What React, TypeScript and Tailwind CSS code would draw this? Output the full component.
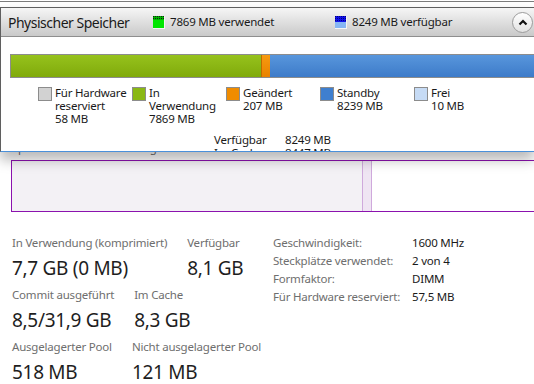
import React from "react";

const UsedIcon = () => (
  <svg width="12" height="13" viewBox="0 0 12 13" aria-hidden="true">
    <defs>
      <pattern id="dotsGreen" width="2" height="2" patternUnits="userSpaceOnUse">
        <rect width="2" height="2" fill="#00b400" />
        <rect width="1" height="1" fill="#0a2a0a" />
      </pattern>
    </defs>
    <rect x="0" y="0" width="12" height="13" fill="#f4f4f4" />
    <rect x="0" y="0" width="11" height="12" fill="#00e600" />
    <rect x="0" y="0" width="11" height="4" fill="url(#dotsGreen)" />
  </svg>
);

const FreeIcon = () => (
  <svg width="12" height="13" viewBox="0 0 12 13" aria-hidden="true">
    <defs>
      <pattern id="dotsBlue" width="2" height="2" patternUnits="userSpaceOnUse">
        <rect width="2" height="2" fill="#1010e8" />
        <rect width="1" height="1" fill="#000080" />
      </pattern>
    </defs>
    <rect x="0" y="0" width="12" height="13" fill="#f4f4f4" />
    <rect x="0" y="0" width="11" height="12" fill="#86b6f4" />
    <rect x="0" y="0" width="11" height="6" fill="url(#dotsBlue)" />
  </svg>
);

const CollapseButton = () => (
  <div className="flex h-[21px] w-[21px] items-center justify-center rounded-full border border-[#9c9c9c] bg-gradient-to-b from-white to-[#e2e2e2]">
    <svg width="10" height="7" viewBox="0 0 10 7" aria-hidden="true">
      <path d="M1.5 5.5 L5 2 L8.5 5.5" fill="none" stroke="#111" strokeWidth="2.2" />
    </svg>
  </div>
);

const legend = [
  { color: "bg-[#d2d2d2]", lines: ["Für Hardware", "reserviert", "58 MB"] },
  { color: "bg-[#8ab814]", lines: ["In", "Verwendung", "7869 MB"] },
  { color: "bg-[#f08c00]", lines: ["Geändert", "207 MB"] },
  { color: "bg-[#3f7fcf]", lines: ["Standby", "8239 MB"] },
  { color: "bg-[#c6dbf5]", lines: ["Frei", "10 MB"] },
];

const stats = [
  [
    { label: "In Verwendung (komprimiert)", value: "7,7 GB (0 MB)" },
    { label: "Verfügbar", value: "8,1 GB" },
  ],
  [
    { label: "Commit ausgeführt", value: "8,5/31,9 GB" },
    { label: "Im Cache", value: "8,3 GB" },
  ],
  [
    { label: "Ausgelagerter Pool", value: "518 MB" },
    { label: "Nicht ausgelagerter Pool", value: "121 MB" },
  ],
];

const details = [
  ["Geschwindigkeit:", "1600 MHz"],
  ["Steckplätze verwendet:", "2 von 4"],
  ["Formfaktor:", "DIMM"],
  ["Für Hardware reserviert:", "57,5 MB"],
];

export default function App() {
  return (
    <div className="relative h-[384px] w-[534px] overflow-hidden whitespace-nowrap bg-white font-['Noto_Sans',sans-serif] text-[11.5px] tracking-[-0.2px] text-[#1a1a1a]">
      {/* page behind the flyout */}
      <div className="h-px" />
      <div className="h-px bg-[#7c7c7c]" />
      <div className="mt-[138px] pl-3 leading-4 text-[#707070]">Speicherzusammensetzung</div>
      <div className="ml-[11px] mt-1 flex h-[52px] border-y border-l border-[#8b12ae]">
        <div className="w-[350px] bg-[#f3f1f5]" />
        <div className="w-[10px] border-x border-[#cfa9dc] bg-[#efe5f3]" />
        <div className="flex-1 bg-white" />
      </div>

      <div className="mt-[23px] flex items-start">
        <div className="flex w-[273px] flex-col gap-1 pl-3">
          {stats.map((row, i) => (
            <div key={i} className="flex gap-5">
              {row.map((s) => (
                <div key={s.label} className="flex flex-col">
                  <span className="leading-4 text-[#6e6e6e]">{s.label}</span>
                  <span className="mt-0.5 text-[19px] leading-[30px] tracking-[-0.3px] text-[#1e1e1e]">{s.value}</span>
                </div>
              ))}
            </div>
          ))}
        </div>
        <div className="-mt-px grid grid-cols-[139px_auto] leading-[18px]">
          {details.map(([k, v]) => (
            <React.Fragment key={k}>
              <span className="text-[#6e6e6e]">{k}</span>
              <span>{v}</span>
            </React.Fragment>
          ))}
        </div>
      </div>

      {/* flyout: Physischer Speicher */}
      <div className="absolute left-0 top-[7px] h-[145px] w-[534px] overflow-hidden border-l border-t border-b border-[#5f5f5f] border-b-[#4a90da] bg-white shadow-[0_8px_12px_rgba(0,0,0,0.28)]">
        <div className="flex h-[29px] items-center border-b border-[#8e8e8e] bg-gradient-to-b from-[#f6f6f6] to-[#c9c9c9] pl-[7px] pr-px">
          <span className="w-[145px] text-[14px] tracking-[-0.5px]">Physischer Speicher</span>
          <div className="flex w-[182px] items-center gap-[5px]">
            <UsedIcon />
            <span>7869 MB verwendet</span>
          </div>
          <div className="flex items-center gap-[5px]">
            <FreeIcon />
            <span>8249 MB verfügbar</span>
          </div>
          <div className="ml-auto">
            <CollapseButton />
          </div>
        </div>

        <div className="ml-[9px] mt-[17px] flex h-6 border-y border-l border-[#8c8c8c]">
          <div className="w-[250px] bg-gradient-to-b from-[#96c21c] to-[#80aa0a]" />
          <div className="w-[9px] border-l border-[#c06a00] bg-gradient-to-b from-[#f79a10] to-[#e88200]" />
          <div className="flex-1 bg-gradient-to-b from-[#5896dc] to-[#3d7bc9]" />
        </div>

        <div className="mt-2 flex pl-[37px] leading-[13px]">
          {legend.map((l) => (
            <div key={l.lines[0]} className="flex w-[94px] gap-[3px]">
              <div className={`mt-px h-[14px] w-[14px] shrink-0 border border-[#8c8c8c] ${l.color}`} />
              <div className="flex flex-col">
                {l.lines.map((t) => (
                  <span key={t}>{t}</span>
                ))}
              </div>
            </div>
          ))}
        </div>

        <div className="ml-[213px] mt-[8px] grid grid-cols-[71px_auto] leading-[13px]">
          <span>Verfügbar</span>
          <span>8249 MB</span>
          <span>Im Cache</span>
          <span>8447 MB</span>
        </div>
      </div>
    </div>
  );
}
